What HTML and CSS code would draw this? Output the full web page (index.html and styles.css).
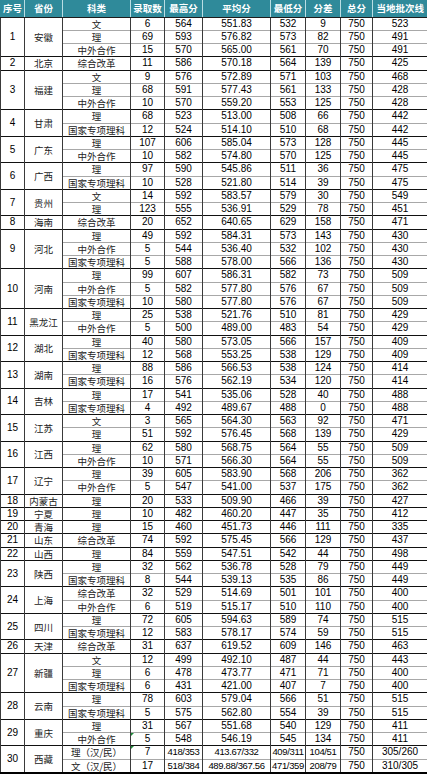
FILE: index.html
```html
<!DOCTYPE html>
<html lang="zh-CN">
<head>
<meta charset="utf-8">
<title>录取分数统计</title>
<link rel="stylesheet" href="styles.css">
</head>
<body>
<table class="score">
<colgroup>
<col class="c1"><col class="c2"><col class="c3"><col class="c4"><col class="c5"><col class="c6"><col class="c7"><col class="c8"><col class="c9"><col class="c10">
</colgroup>
<thead>
<tr class="head"><th>序号</th><th>省份</th><th>科类</th><th>录取数</th><th>最高分</th><th>平均分</th><th>最低分</th><th>分差</th><th>总分</th><th>当地批次线</th></tr>
</thead>
<tbody>
<tr class="r g"><td rowspan="3">1</td><td rowspan="3" class="zh">安徽</td><td class="zh">文</td><td>6</td><td>564</td><td>551.83</td><td>532</td><td>9</td><td>750</td><td>523</td></tr>
<tr class="r"><td class="zh">理</td><td>69</td><td>593</td><td>576.82</td><td>573</td><td>82</td><td>750</td><td>491</td></tr>
<tr class="r"><td class="zh">中外合作</td><td>15</td><td>570</td><td>565.00</td><td>561</td><td>70</td><td>750</td><td>491</td></tr>
<tr class="r g"><td>2</td><td class="zh">北京</td><td class="zh">综合改革</td><td>11</td><td>586</td><td>570.18</td><td>564</td><td>139</td><td>750</td><td>425</td></tr>
<tr class="r g"><td rowspan="3">3</td><td rowspan="3" class="zh">福建</td><td class="zh">文</td><td>9</td><td>576</td><td>572.89</td><td>571</td><td>103</td><td>750</td><td>468</td></tr>
<tr class="r"><td class="zh">理</td><td>68</td><td>591</td><td>577.43</td><td>561</td><td>133</td><td>750</td><td>428</td></tr>
<tr class="r"><td class="zh">中外合作</td><td>10</td><td>570</td><td>559.20</td><td>553</td><td>125</td><td>750</td><td>428</td></tr>
<tr class="r g"><td rowspan="2">4</td><td rowspan="2" class="zh">甘肃</td><td class="zh">理</td><td>68</td><td>523</td><td>513.00</td><td>508</td><td>66</td><td>750</td><td>442</td></tr>
<tr class="r"><td class="zh">国家专项理科</td><td>12</td><td>524</td><td>514.10</td><td>510</td><td>68</td><td>750</td><td>442</td></tr>
<tr class="r g"><td rowspan="2">5</td><td rowspan="2" class="zh">广东</td><td class="zh">理</td><td>107</td><td>606</td><td>585.04</td><td>573</td><td>128</td><td>750</td><td>445</td></tr>
<tr class="r"><td class="zh">中外合作</td><td>10</td><td>582</td><td>574.80</td><td>570</td><td>125</td><td>750</td><td>445</td></tr>
<tr class="r g"><td rowspan="2">6</td><td rowspan="2" class="zh">广西</td><td class="zh">理</td><td>97</td><td>590</td><td>545.86</td><td>511</td><td>36</td><td>750</td><td>475</td></tr>
<tr class="r"><td class="zh">国家专项理科</td><td>10</td><td>528</td><td>521.80</td><td>514</td><td>39</td><td>750</td><td>475</td></tr>
<tr class="r g"><td rowspan="2">7</td><td rowspan="2" class="zh">贵州</td><td class="zh">文</td><td>14</td><td>592</td><td>583.57</td><td>579</td><td>30</td><td>750</td><td>549</td></tr>
<tr class="r"><td class="zh">理</td><td>123</td><td>555</td><td>536.91</td><td>529</td><td>78</td><td>750</td><td>451</td></tr>
<tr class="r g"><td>8</td><td class="zh">海南</td><td class="zh">综合改革</td><td>20</td><td>652</td><td>640.65</td><td>629</td><td>158</td><td>750</td><td>471</td></tr>
<tr class="r g"><td rowspan="3">9</td><td rowspan="3" class="zh">河北</td><td class="zh">理</td><td>49</td><td>592</td><td>584.31</td><td>573</td><td>143</td><td>750</td><td>430</td></tr>
<tr class="r"><td class="zh">中外合作</td><td>5</td><td>544</td><td>536.40</td><td>532</td><td>102</td><td>750</td><td>430</td></tr>
<tr class="r"><td class="zh">国家专项理科</td><td>5</td><td>588</td><td>578.00</td><td>566</td><td>136</td><td>750</td><td>430</td></tr>
<tr class="r g"><td rowspan="3">10</td><td rowspan="3" class="zh">河南</td><td class="zh">理</td><td>99</td><td>607</td><td>586.31</td><td>582</td><td>73</td><td>750</td><td>509</td></tr>
<tr class="r"><td class="zh">中外合作</td><td>5</td><td>582</td><td>577.80</td><td>576</td><td>67</td><td>750</td><td>509</td></tr>
<tr class="r"><td class="zh">国家专项理科</td><td>10</td><td>580</td><td>577.80</td><td>576</td><td>67</td><td>750</td><td>509</td></tr>
<tr class="r g"><td rowspan="2">11</td><td rowspan="2" class="zh">黑龙江</td><td class="zh">理</td><td>25</td><td>538</td><td>521.76</td><td>510</td><td>81</td><td>750</td><td>429</td></tr>
<tr class="r"><td class="zh">中外合作</td><td>5</td><td>500</td><td>489.00</td><td>483</td><td>54</td><td>750</td><td>429</td></tr>
<tr class="r g"><td rowspan="2">12</td><td rowspan="2" class="zh">湖北</td><td class="zh">理</td><td>40</td><td>580</td><td>573.05</td><td>566</td><td>157</td><td>750</td><td>409</td></tr>
<tr class="r"><td class="zh">国家专项理科</td><td>12</td><td>568</td><td>553.25</td><td>538</td><td>129</td><td>750</td><td>409</td></tr>
<tr class="r g"><td rowspan="2">13</td><td rowspan="2" class="zh">湖南</td><td class="zh">理</td><td>88</td><td>586</td><td>566.53</td><td>538</td><td>124</td><td>750</td><td>414</td></tr>
<tr class="r"><td class="zh">国家专项理科</td><td>16</td><td>576</td><td>562.19</td><td>534</td><td>120</td><td>750</td><td>414</td></tr>
<tr class="r g"><td rowspan="2">14</td><td rowspan="2" class="zh">吉林</td><td class="zh">理</td><td>17</td><td>541</td><td>535.06</td><td>528</td><td>40</td><td>750</td><td>488</td></tr>
<tr class="r"><td class="zh">国家专项理科</td><td>4</td><td>492</td><td>489.67</td><td>488</td><td>0</td><td>750</td><td>488</td></tr>
<tr class="r g"><td rowspan="2">15</td><td rowspan="2" class="zh">江苏</td><td class="zh">文</td><td>3</td><td>565</td><td>564.30</td><td>563</td><td>92</td><td>750</td><td>471</td></tr>
<tr class="r"><td class="zh">理</td><td>51</td><td>592</td><td>576.45</td><td>568</td><td>139</td><td>750</td><td>429</td></tr>
<tr class="r g"><td rowspan="2">16</td><td rowspan="2" class="zh">江西</td><td class="zh">理</td><td>62</td><td>580</td><td>568.75</td><td>564</td><td>55</td><td>750</td><td>509</td></tr>
<tr class="r"><td class="zh">中外合作</td><td>10</td><td>571</td><td>566.30</td><td>564</td><td>55</td><td>750</td><td>509</td></tr>
<tr class="r g"><td rowspan="2">17</td><td rowspan="2" class="zh">辽宁</td><td class="zh">理</td><td>39</td><td>605</td><td>583.90</td><td>568</td><td>206</td><td>750</td><td>362</td></tr>
<tr class="r"><td class="zh">中外合作</td><td>5</td><td>547</td><td>541.00</td><td>537</td><td>175</td><td>750</td><td>362</td></tr>
<tr class="r g"><td>18</td><td class="zh">内蒙古</td><td class="zh">理</td><td>20</td><td>533</td><td>509.90</td><td>466</td><td>39</td><td>750</td><td>427</td></tr>
<tr class="r g"><td>19</td><td class="zh">宁夏</td><td class="zh">理</td><td>10</td><td>482</td><td>460.20</td><td>447</td><td>35</td><td>750</td><td>412</td></tr>
<tr class="r g"><td>20</td><td class="zh">青海</td><td class="zh">理</td><td>15</td><td>460</td><td>451.73</td><td>446</td><td>111</td><td>750</td><td>335</td></tr>
<tr class="r g"><td>21</td><td class="zh">山东</td><td class="zh">综合改革</td><td>74</td><td>592</td><td>575.45</td><td>566</td><td>129</td><td>750</td><td>437</td></tr>
<tr class="r g"><td>22</td><td class="zh">山西</td><td class="zh">理</td><td>84</td><td>559</td><td>547.51</td><td>542</td><td>44</td><td>750</td><td>498</td></tr>
<tr class="r g"><td rowspan="2">23</td><td rowspan="2" class="zh">陕西</td><td class="zh">理</td><td>32</td><td>562</td><td>536.78</td><td>528</td><td>79</td><td>750</td><td>449</td></tr>
<tr class="r"><td class="zh">国家专项理科</td><td>8</td><td>544</td><td>539.13</td><td>535</td><td>86</td><td>750</td><td>449</td></tr>
<tr class="r g"><td rowspan="2">24</td><td rowspan="2" class="zh">上海</td><td class="zh">综合改革</td><td>32</td><td>529</td><td>514.69</td><td>501</td><td>101</td><td>750</td><td>400</td></tr>
<tr class="r"><td class="zh">中外合作</td><td>6</td><td>519</td><td>515.17</td><td>510</td><td>110</td><td>750</td><td>400</td></tr>
<tr class="r g"><td rowspan="2">25</td><td rowspan="2" class="zh">四川</td><td class="zh">理</td><td>72</td><td>605</td><td>594.63</td><td>589</td><td>74</td><td>750</td><td>515</td></tr>
<tr class="r"><td class="zh">国家专项理科</td><td>12</td><td>583</td><td>578.17</td><td>574</td><td>59</td><td>750</td><td>515</td></tr>
<tr class="r g"><td>26</td><td class="zh">天津</td><td class="zh">综合改革</td><td>31</td><td>637</td><td>619.52</td><td>609</td><td>146</td><td>750</td><td>463</td></tr>
<tr class="r g"><td rowspan="3">27</td><td rowspan="3" class="zh">新疆</td><td class="zh">文</td><td>12</td><td>499</td><td>492.10</td><td>487</td><td>44</td><td>750</td><td>443</td></tr>
<tr class="r"><td class="zh">理</td><td>6</td><td>478</td><td>473.77</td><td>471</td><td>71</td><td>750</td><td>400</td></tr>
<tr class="r"><td class="zh">国家专项理科</td><td>6</td><td>431</td><td>421.00</td><td>407</td><td>7</td><td>750</td><td>400</td></tr>
<tr class="r g"><td rowspan="2">28</td><td rowspan="2" class="zh">云南</td><td class="zh">理</td><td>78</td><td>603</td><td>579.04</td><td>566</td><td>51</td><td>750</td><td>515</td></tr>
<tr class="r"><td class="zh">国家专项理科</td><td>5</td><td>575</td><td>562.80</td><td>554</td><td>39</td><td>750</td><td>515</td></tr>
<tr class="r g"><td rowspan="2">29</td><td rowspan="2" class="zh">重庆</td><td class="zh">理</td><td>31</td><td>567</td><td>551.68</td><td>540</td><td>129</td><td>750</td><td>411</td></tr>
<tr class="r"><td class="zh">中外合作</td><td class="flag">5</td><td>548</td><td>546.19</td><td>545</td><td>134</td><td>750</td><td>411</td></tr>
<tr class="r g"><td rowspan="2">30</td><td rowspan="2" class="zh">西藏</td><td class="zh">理（汉/民）</td><td class="flag">7</td><td class="sl">418/353</td><td class="sl">413.67/332</td><td class="sl">409/311</td><td class="sl">104/51</td><td>750</td><td>305/260</td></tr>
<tr class="r"><td class="zh">文（汉/民）</td><td>17</td><td class="sl">518/384</td><td class="sl">489.88/367.56</td><td class="sl">471/359</td><td class="sl">208/79</td><td>750</td><td>310/305</td></tr>
</tbody>
</table>
</body>
</html>
```

FILE: styles.css
```css
html, body {
  margin: 0;
  padding: 0;
  background: #ffffff;
}

.score {
  width: 427px;
  table-layout: fixed;
  border-collapse: collapse;
  font-family: "Liberation Sans", "Noto Sans CJK SC", sans-serif;
  font-size: 10px;
  color: #000;
  border-bottom: 2px solid #000;
}

.c1 { width: 24px; }
.c2 { width: 38px; }
.c3 { width: 68px; }
.c4 { width: 34px; }
.c5 { width: 38px; }
.c6 { width: 68px; }
.c7 { width: 35px; }
.c8 { width: 35px; }
.c9 { width: 32px; }
.c10 { width: 55px; }

.head {
  height: 17px;
}

.head th {
  background: #2f8a9a;
  color: #ffffff;
  font-weight: bold;
  font-family: "Noto Sans CJK SC", sans-serif;
  font-size: 9.5px;
  line-height: 12px;
  padding: 0;
  text-align: center;
  border-left: 1px solid #b9dde3;
  border-bottom: 1px solid #1d1d1d;
  white-space: nowrap;
  overflow: hidden;
}

.head th:first-child {
  border-left: 1px solid #2f8a9a;
}

.r {
  height: 13.25px;
}

.r td {
  padding: 0;
  line-height: 12px;
  text-align: center;
  vertical-align: middle;
  white-space: nowrap;
  overflow: hidden;
  border-left: 1px solid #3a3a3a;
  border-right: 1px solid #3a3a3a;
  border-top: 1px solid #a8a8a8;
}

.r.g td {
  border-top: 1px solid #111;
}

.r td.zh {
  color: #222;
  font-family: "Noto Sans CJK SC", sans-serif;
  font-size: 9.5px;
}

.r td.sl {
  font-size: 9.5px;
  letter-spacing: -0.35px;
}

.r td.flag {
  position: relative;
}

.r td.flag::before {
  content: "";
  position: absolute;
  left: 0;
  top: 0;
  border-top: 3px solid #1f8a3a;
  border-right: 3px solid transparent;
}
```
